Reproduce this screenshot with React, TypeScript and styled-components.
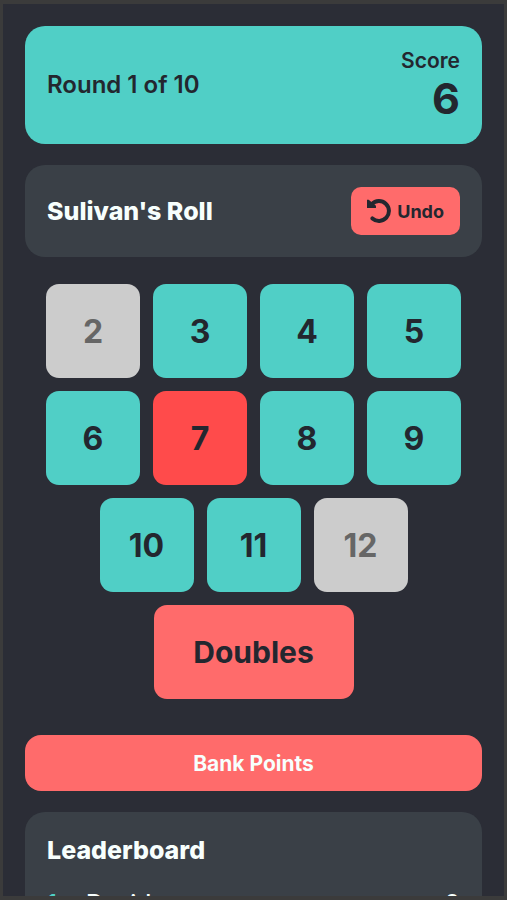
import { useState } from "react";
import styled, { createGlobalStyle } from "styled-components";

const colors = {
  frame: "#3b3b3b",
  page: "#2b2d36",
  panel: "#3a4047",
  teal: "#50cfc6",
  coral: "#ff6b6b",
  red: "#ff4b4b",
  disabled: "#cccccc",
  disabledText: "#666666",
  ink: "#23272f",
  light: "#f7fffd",
};

const GlobalStyle = createGlobalStyle`
  *, *::before, *::after { box-sizing: border-box; }
  body {
    margin: 0;
    background: ${colors.frame};
    font-family: Inter, "Liberation Sans", sans-serif;
    color: ${colors.ink};
  }
  button { font-family: inherit; border: 0; cursor: pointer; }
`;

const Frame = styled.div`
  height: 100vh;
  border: solid ${colors.frame};
  border-width: 4px 3px;
  background: ${colors.page};
  overflow-y: auto;
  scrollbar-width: none;
`;

const Page = styled.main`
  display: flex;
  flex-direction: column;
  padding: 22px;
`;

const Card = styled.section<{ $accent?: boolean }>`
  padding: 22px;
  border-radius: 20px;
  background: ${(p) => (p.$accent ? colors.teal : colors.panel)};
`;

const CardRow = styled(Card)`
  display: flex;
  align-items: center;
  justify-content: space-between;
  margin-bottom: 21px;
`;

const RoundLabel = styled.span`
  font-size: 24px;
  font-weight: 600;
  line-height: 32px;
`;

const ScoreBox = styled.div`
  text-align: right;
`;

const ScoreLabel = styled.div`
  font-size: 21px;
  font-weight: 600;
  line-height: 26px;
`;

const ScoreValue = styled.div`
  font-size: 43px;
  font-weight: 700;
  line-height: 48px;
`;

const Heading = styled.h2`
  margin: 0;
  font-size: 25px;
  font-weight: 800;
  line-height: 32px;
  color: ${colors.light};
`;

const UndoButton = styled.button`
  display: flex;
  align-items: center;
  gap: 6px;
  height: 48px;
  padding: 0 16px;
  border-radius: 10px;
  background: ${colors.coral};
  color: ${colors.ink};
  font-size: 18px;
  font-weight: 700;
`;

const RollPad = styled.div`
  display: flex;
  flex-wrap: wrap;
  justify-content: center;
  gap: 13px;
  width: 100%;
  max-width: 460px;
  margin: 6px auto 36px;
`;

type Tone = "teal" | "red" | "coral";

const RollButton = styled.button<{ $tone: Tone; $wide?: boolean }>`
  width: ${(p) => (p.$wide ? 200 : 94)}px;
  height: 94px;
  padding: 0;
  border-radius: 13px;
  background: ${(p) => colors[p.$tone]};
  color: ${colors.ink};
  font-size: ${(p) => (p.$wide ? 30 : 32)}px;
  font-weight: 700;

  &:disabled {
    background: ${colors.disabled};
    color: ${colors.disabledText};
    cursor: default;
  }
`;

const BankButton = styled.button`
  height: 56px;
  margin-bottom: 21px;
  border-radius: 16px;
  background: ${colors.coral};
  color: ${colors.light};
  font-size: 21px;
  font-weight: 700;
`;

const Standings = styled.ol`
  list-style: none;
  margin: 22px 0 0;
  padding: 0;
`;

const Standing = styled.li`
  display: grid;
  grid-template-columns: 26px 1fr auto;
  gap: 13px;
  padding-bottom: 16px;
  font-size: 24px;
  font-weight: 500;
  line-height: 32px;
  color: ${colors.light};
`;

const Rank = styled.span`
  color: ${colors.teal};
`;

const UndoIcon = () => (
  <svg width="24" height="24" viewBox="0 0 23 23" aria-hidden="true">
    <path
      d="M4.6 5A9.5 9.5 0 1 1 5.2 18.6"
      fill="none"
      stroke="currentColor"
      strokeWidth="3.8"
      strokeLinecap="round"
    />
    <path d="M0 .6L1.6 .6L8.6 6.4V8.6H0Z" fill="currentColor" />
  </svg>
);

const rolls = [2, 3, 4, 5, 6, 7, 8, 9, 10, 11, 12];
const unavailable = [2, 12];

export default function App() {
  const [history, setHistory] = useState<number[]>([6]);
  const score = history.reduce((a, b) => a + b, 0);
  const roll = (n: number) => setHistory(n === 7 ? [] : [...history, n]);

  return (
    <>
      <GlobalStyle />
      <Frame>
        <Page>
          <CardRow $accent>
            <RoundLabel>Round 1 of 10</RoundLabel>
            <ScoreBox>
              <ScoreLabel>Score</ScoreLabel>
              <ScoreValue>{score}</ScoreValue>
            </ScoreBox>
          </CardRow>
          <CardRow>
            <Heading>Sulivan's Roll</Heading>
            <UndoButton type="button" onClick={() => setHistory(history.slice(0, -1))}>
              <UndoIcon />
              Undo
            </UndoButton>
          </CardRow>
          <RollPad>
            {rolls.map((n) => (
              <RollButton
                key={n}
                type="button"
                $tone={n === 7 ? "red" : "teal"}
                disabled={unavailable.includes(n)}
                onClick={() => roll(n)}
              >
                {n}
              </RollButton>
            ))}
            <RollButton type="button" $tone="coral" $wide onClick={() => roll(score)}>
              Doubles
            </RollButton>
          </RollPad>
          <BankButton type="button">Bank Points</BankButton>
          <Card>
            <Heading>Leaderboard</Heading>
            <Standings>
              <Standing>
                <Rank>1.</Rank>
                <span>David</span>
                <span>0</span>
              </Standing>
            </Standings>
          </Card>
        </Page>
      </Frame>
    </>
  );
}
